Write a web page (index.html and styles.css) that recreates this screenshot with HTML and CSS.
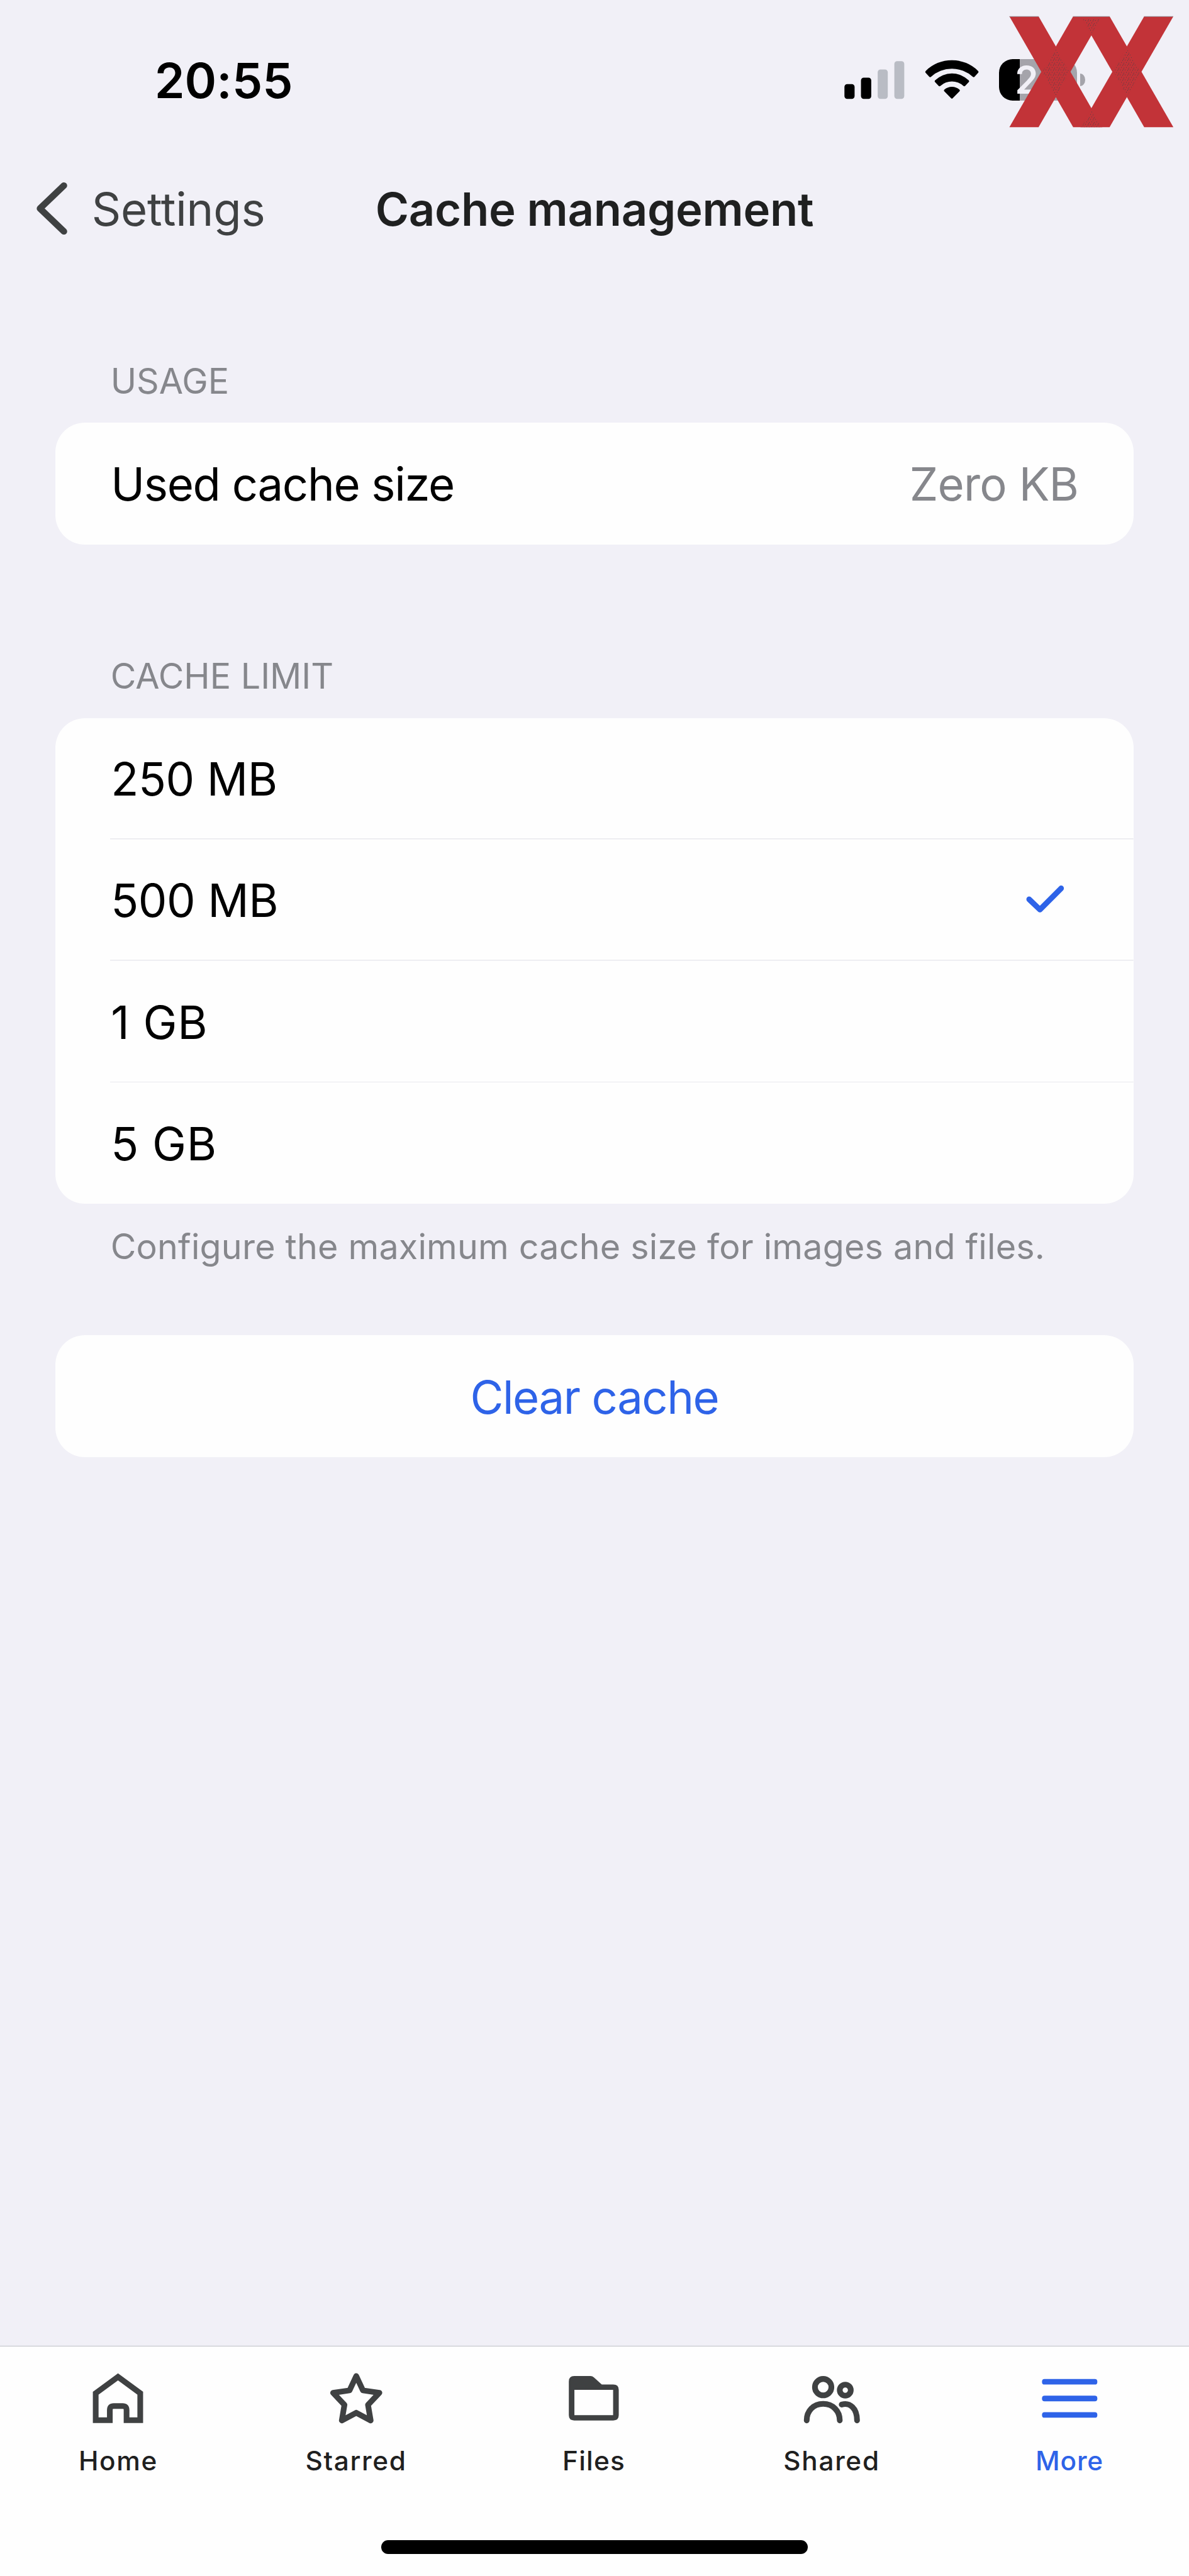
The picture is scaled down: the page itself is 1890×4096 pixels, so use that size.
FILE: index.html
```html
<!DOCTYPE html>
<html lang="en">
<head>
<meta charset="utf-8">
<title>Cache management</title>
<link rel="stylesheet" href="styles.css">
</head>
<body>
<div class="screen">
  <header class="status">
    <span class="clock">20:55</span>
    <div class="indicators">
      <svg class="signal" viewBox="1363 95 98 68" aria-hidden="true">
        <rect x="1363.3" y="135.3" width="16.4" height="24" rx="4.5"/>
        <rect x="1390" y="125" width="16.6" height="34.3" rx="4.5"/>
        <g fill="#b9bcc4">
          <rect x="1417" y="111.7" width="16.3" height="47.6" rx="4.5"/>
          <rect x="1443.9" y="98.2" width="16" height="61.1" rx="4.5"/>
        </g>
      </svg>
      <svg class="wifi" viewBox="1493 95 88 68" aria-hidden="true">
        <path d="M1494.4 114.2A60 60 0 0 1 1579.2 114.2Q1580.4 115.6 1579.2 117L1573.4 123.4Q1572 124.8 1570.4 123.4A50 50 0 0 0 1503.2 123.4Q1501.6 124.8 1500.2 123.4L1494.4 117Q1493.2 115.6 1494.4 114.2Z"/>
        <path d="M1509.6 129.4A38.5 38.5 0 0 1 1564 129.4Q1565.2 130.8 1564 132.2L1558.3 138.2Q1556.8 139.6 1555.2 138.2A27.500 27.500 0 0 0 1518.400 138.200Q1516.800 139.600 1515.300 138.200L1509.600 132.200Q1508.400 130.800 1509.600 129.400Z"/>
        <path d="M1524.6 144.300A18.500 18.500 0 0 1 1549 144.300Q1550.300 145.700 1549 147L1538 158.200Q1536.800 159.400 1535.600 158.200L1524.600 147Q1523.300 145.700 1524.600 144.300Z"/>
      </svg>
      <div class="battery">
        <div class="battery-body"><span class="battery-level">2</span></div>
        <div class="battery-nub"></div>
      </div>
    </div>
    <svg class="brand" viewBox="1629 25 266 181" aria-hidden="true">
      <defs>
        <pattern id="speckle" width="8" height="8" patternUnits="userSpaceOnUse">
          <g fill="#4a4347">
            <rect x="0" y="0" width="1" height="1"/><rect x="4" y="1" width="1" height="1"/>
            <rect x="2" y="4" width="1" height="1"/><rect x="6" y="5" width="1" height="1"/>
            <rect x="5" y="7" width="1" height="1"/>
          </g>
        </pattern>
      </defs>
      <g fill="#c23338">
        <path d="M1629.500 26H1676.600L1779.600 205H1732.500Z"/>
        <path d="M1732.500 26H1779.600L1676.600 205H1629.500Z"/>
        <path d="M1744.200 26H1791.300L1894.300 205H1847.200Z"/>
        <path d="M1847.200 26H1894.300L1791.300 205H1744.200Z"/>
      </g>
      <path d="M1629.500 26.300H1676.600M1732.500 26.300H1791.300M1847.200 26.300H1894.300" stroke="#95929a" stroke-width="1"/>
      <g fill="url(#speckle)">
        <path d="M1704.500 79L1726.500 115.500L1704.500 155L1683 115.500Z"/>
        <path d="M1819.300 79L1841 115.500L1819.300 155L1797.500 115.500Z"/>
        <path d="M1748 30H1776L1762 54Z"/>
        <path d="M1762 178L1778 205H1746Z"/>
      </g>
    </svg>
  </header>

  <nav class="navbar">
    <a class="back">
      <svg class="chevron" viewBox="59 294 50 87" aria-hidden="true"><path d="M103.300 300.200L64.600 337.200L103.300 374.200"/></svg>
      <span class="back-label">Settings</span>
    </a>
    <h1 class="title">Cache management</h1>
  </nav>

  <main class="content">
    <h2 class="section-label usage-label">USAGE</h2>
    <section class="card">
      <div class="row"><span class="used">Used cache size</span><span class="value">Zero KB</span></div>
    </section>

    <h2 class="section-label limit-label">CACHE LIMIT</h2>
    <section class="card">
      <div class="row option"><span class="size">250 MB</span></div>
      <div class="row option"><span class="size">500 MB</span>
        <svg class="check" viewBox="1657 1431 62 46" aria-hidden="true"><path d="M1662 1454.300L1679.400 1471L1713.600 1436.600"/></svg>
      </div>
      <div class="row option"><span class="size-gb">1 GB</span></div>
      <div class="row option"><span class="size-gb">5 GB</span></div>
    </section>
    <p class="note">Configure the maximum cache size for images and files.</p>

    <button class="card clear">Clear cache</button>
  </main>

  <footer class="tabbar">
    <div class="tabs">
      <a class="tab">
        <svg class="tab-icon" viewBox="143 3828 96 96" aria-hidden="true"><path d="M154.300 3867L190.300 3840.500L226.200 3867V3910.500H204.100V3894Q204.100 3887.700 197.800 3887.700H183.400Q177.100 3887.700 177.100 3894V3910.500H154.300Z"/></svg>
        <span class="tab-label">Home</span>
      </a>
      <a class="tab">
        <svg class="tab-icon star" viewBox="526.500 3828 96 96" aria-hidden="true"><path d="M574.500 3839.300L585.300 3862.400L611.900 3866.300L593.500 3885.700L597.800 3911L574.500 3898.500L551.200 3911L555.500 3885.700L537.100 3866.300L563.700 3862.400Z"/></svg>
        <span class="tab-label">Starred</span>
      </a>
      <a class="tab">
        <svg class="tab-icon solid" viewBox="911 3828 96 96" aria-hidden="true"><path fill-rule="evenodd" d="M927 3839.300H953Q956.500 3839.300 958.800 3841.500L971.500 3853H990Q998.900 3853 998.900 3861.500V3902.500Q998.900 3911 990 3911H927Q918.300 3911 918.300 3902.500V3848Q918.300 3839.300 927 3839.300ZM927.300 3861.500V3902.300H989.800V3861.500Z"/></svg>
        <span class="tab-label files">Files</span>
      </a>
      <a class="tab">
        <svg class="tab-icon round" viewBox="1295 3828 96 96" aria-hidden="true">
          <circle cx="1329" cy="3857.200" r="13.300"/>
          <circle cx="1364.700" cy="3862" r="8.900"/>
          <path d="M1302.400 3910.900C1302.400 3896 1313 3884.200 1329 3884.200S1355.800 3896 1355.800 3910.900"/>
          <path d="M1358.900 3885.300C1372 3881.500 1383.700 3891 1383.700 3910.900"/>
        </svg>
        <span class="tab-label">Shared</span>
      </a>
      <a class="tab active">
        <svg class="tab-icon solid" viewBox="1680 3828 96 96" aria-hidden="true">
          <rect x="1683.400" y="3844" width="89.300" height="9" rx="4"/>
          <rect x="1683.400" y="3871" width="89.300" height="9" rx="4"/>
          <rect x="1683.400" y="3897.600" width="89.300" height="9" rx="4"/>
        </svg>
        <span class="tab-label more">More</span>
      </a>
    </div>
    <div class="home-indicator"></div>
  </footer>
</div>
</body>
</html>
```
FILE: styles.css
```css
html {
  font-size: 9.84375px;
}

* {
  box-sizing: border-box;
}

body {
  margin: 0;
  background: #f1f0f7;
  font-family: Inter, "Liberation Sans", sans-serif;
  color: #000;
}

h1, h2, p {
  margin: 0;
  font-weight: 400;
}

svg {
  display: block;
  flex: none;
}

.screen {
  display: flex;
  flex-direction: column;
  width: 192rem;
  height: 416.1rem;
  overflow: hidden;
}

/* Status bar */
.status {
  position: relative;
  display: flex;
  align-items: center;
  justify-content: space-between;
  height: 26.2rem;
  padding: 0 16.8rem 0 24.96rem;
}

.clock {
  font-size: 7.8rem;
  font-weight: 600;
  letter-spacing: 0.01rem;
  line-height: 1;
}

.indicators {
  display: flex;
  align-items: center;
}

.signal {
  width: 9.8rem;
  height: 6.8rem;
  margin-right: 3.2rem;
  margin-top: -0.4rem;
}

.wifi {
  width: 8.8rem;
  height: 6.8rem;
  margin-right: 3.2rem;
  margin-top: -0.4rem;
}

.battery {
  display: flex;
  align-items: center;
  gap: 0.45rem;
  margin-top: -0.4rem;
}

.battery-body {
  width: 12.66rem;
  height: 6.74rem;
  border-radius: 2.2rem;
  background: linear-gradient(90deg, #000 3.33rem, #a5a4ab 3.33rem);
  padding-left: 2.6rem;
}

.battery-level {
  font-size: 6.1rem;
  font-weight: 600;
  line-height: 6.8rem;
  color: #f1f0f7;
}

.battery-nub {
  width: 0.8rem;
  height: 2.1rem;
  border-radius: 0 100% 100% 0 / 0 50% 50% 0;
  background: #a5a4ab;
}

.brand {
  position: absolute;
  left: 162.9rem;
  top: 2.5rem;
  width: 26.6rem;
  height: 18.1rem;
}

/* Navigation bar */
.navbar {
  display: grid;
  grid-template-columns: 1fr auto 1fr;
  align-items: center;
  height: 15.1rem;
  padding: 0 5.9rem;
}

.back {
  display: flex;
  align-items: center;
  gap: 3.9rem;
  color: #3f4142;
}

.chevron {
  width: 5rem;
  height: 8.7rem;
  fill: none;
  stroke: #3f4142;
  stroke-width: 10.5;
  stroke-linecap: round;
  stroke-linejoin: round;
}

.back-label {
  font-size: 7.36rem;
  letter-spacing: -0.02rem;
}

.title {
  font-size: 7.36rem;
  font-weight: 600;
  letter-spacing: -0.031rem;
  color: #1f2020;
}

/* Settings list */
.content {
  display: flex;
  flex-direction: column;
  padding: 16.35rem 8.95rem 0;
}

.section-label,
.note {
  padding-left: 8.9rem;
  font-size: 5.65rem;
  line-height: 8rem;
  color: #86878c;
}

.usage-label {
  margin-bottom: 2.62rem;
}

.limit-label {
  margin: 17.28rem 0 2.74rem;
}

.card {
  overflow: hidden;
  border-radius: 4.8rem;
  background: #fefefe;
}

.row {
  display: flex;
  align-items: center;
  justify-content: space-between;
  height: 19.68rem;
  padding: 0.2rem 8.9rem 0 8.95rem;
  font-size: 7.36rem;
}

.option {
  height: 19.63rem;
  padding-top: 0.1rem;
  background: linear-gradient(#e9e9ee, #e9e9ee) right bottom / 165.25rem 0.16rem no-repeat;
}

.option:last-child {
  background: none;
}

.used {
  letter-spacing: -0.134rem;
}

.value {
  letter-spacing: -0.074rem;
  color: #86878c;
}

.size {
  letter-spacing: -0.045rem;
}

.size-gb {
  letter-spacing: 0.07rem;
}

.check {
  width: 6.2rem;
  height: 4.6rem;
  margin-right: 2.3rem;
  margin-top: -0.4rem;
  fill: none;
  stroke: #2e63e8;
  stroke-width: 9;
  stroke-linecap: round;
  stroke-linejoin: round;
}

.note {
  margin: 2.88rem 0 10.35rem;
  letter-spacing: 0.02rem;
  white-space: nowrap;
}

.clear {
  height: 19.7rem;
  padding: 0.2rem 0 0;
  border: 0;
  font: 400 7.36rem Inter, "Liberation Sans", sans-serif;
  letter-spacing: -0.149rem;
  color: #2e63e8;
}

/* Tab bar */
.tabbar {
  display: flex;
  flex-direction: column;
  align-items: center;
  justify-content: space-between;
  height: 37.2rem;
  margin-top: auto;
  padding-bottom: 3.6rem;
  border-top: 0.2rem solid #bdc0c6;
  background: #fefefe;
}

.tabs {
  display: grid;
  grid-template-columns: repeat(5, 38.4rem);
  width: 192rem;
  padding: 3.7rem 0 0;
}

.tab {
  display: flex;
  flex-direction: column;
  align-items: center;
  gap: 2.35rem;
  transform: translateX(-0.1rem);
}

.tab-icon {
  width: 9.6rem;
  height: 9.6rem;
  fill: none;
  stroke: #3f4142;
  stroke-width: 9.2;
}

.star,
.round {
  stroke-linecap: round;
  stroke-linejoin: round;
}

.solid {
  fill: #3f4142;
  stroke: none;
}

.tab-label {
  font-size: 4.3rem;
  font-weight: 500;
  line-height: 5.6rem;
  letter-spacing: 0.17rem;
  color: #1f2020;
}

.files {
  letter-spacing: 0.126rem;
}

.more {
  letter-spacing: 0.093rem;
}

.active .tab-icon {
  fill: #2e63e8;
}

.active .tab-label {
  color: #2e63e8;
}

.home-indicator {
  width: 68.8rem;
  height: 2.2rem;
  border-radius: 1.1rem;
  background: #000;
}
```
